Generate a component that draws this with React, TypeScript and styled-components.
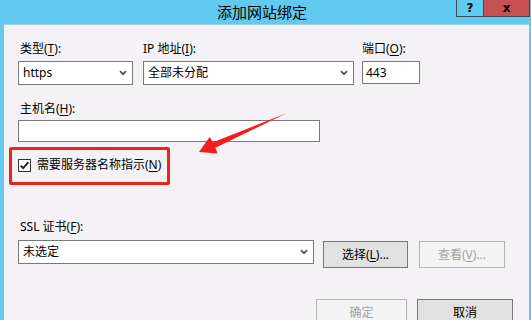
import React from "react";
import styled, { createGlobalStyle } from "styled-components";

const Global = createGlobalStyle`
  html, body { margin: 0; padding: 0; background: #62c9ef; }
  body { font-family: "Noto Sans", "Noto Sans CJK SC", sans-serif; font-size: 12px; color: #000; }
  * { box-sizing: border-box; }
`;

const Window = styled.div`
  position: relative;
  width: 531px;
  height: 320px;
  overflow: hidden;
  background: #62c9ef;
  display: flex;
  flex-direction: column;
  padding: 0 2px 0 4px;
`;

const TitleBar = styled.div`
  height: 27px;
  margin: 0 -2px 0 -4px;
  display: grid;
  grid-template-columns: 1fr auto 1fr;
  align-items: start;
`;

const Title = styled.div`
  grid-column: 2;
  font-family: "Noto Sans CJK SC", sans-serif;
  font-size: 15px;
  line-height: 24px;
  padding-right: 7px;
  color: #000;
`;

const Controls = styled.div`
  grid-column: 3;
  justify-self: end;
  display: flex;
  margin-right: 1px;
`;

const WinButton = styled.div<{ $close?: boolean }>`
  width: ${(p) => (p.$close ? 46 : 28)}px;
  height: 17px;
  background: ${(p) => (p.$close ? "#c75050" : "transparent")};
  border: 1px solid #3b4b55;
  border-top: none;
  ${(p) => (p.$close ? "border-left: none;" : "")}
  display: flex;
  align-items: center;
  justify-content: center;
  font-family: "DejaVu Sans", sans-serif;
  font-weight: bold;
  font-size: ${(p) => (p.$close ? 12 : 12)}px;
  line-height: 1;
  color: #000;
`;

const Panel = styled.div`
  flex: 1;
  background: #f5f2f6;
  border-top: 1px solid #9fd2e6;
  padding: 16px 16px 0 14px;
  display: flex;
  flex-direction: column;
`;

const TopRow = styled.div`
  display: flex;
  align-items: flex-start;
`;

const Field = styled.div<{ $w: number; $mr?: number }>`
  width: ${(p) => p.$w}px;
  margin-right: ${(p) => p.$mr ?? 0}px;
  display: flex;
  flex-direction: column;
`;

const Label = styled.div<{ $indent?: number; $gap?: number }>`
  font-size: 12px;
  line-height: 16px;
  padding-left: ${(p) => p.$indent ?? 0}px;
  margin-bottom: ${(p) => p.$gap ?? 4}px;
  white-space: nowrap;
  u { text-decoration-thickness: 1px; text-underline-offset: 2px; }
`;

const Select = styled.div<{ $w?: number }>`
  width: ${(p) => (p.$w ? `${p.$w}px` : "100%")};
  height: 24px;
  background: #fff;
  border: 1px solid #7a7a7a;
  display: flex;
  align-items: center;
  justify-content: space-between;
  padding: 0 5px 0 4px;
  font-size: 12px;
  line-height: 16px;
`;

const TextBox = styled.div<{ $w?: number; $h?: number }>`
  width: ${(p) => (p.$w ? `${p.$w}px` : "100%")};
  height: ${(p) => p.$h ?? 24}px;
  background: #fff;
  border: 1px solid #7a7a7a;
  display: flex;
  align-items: center;
  padding: 0 3px;
  font-size: 12px;
`;

const HostField = styled.div`
  margin-top: 16px;
  display: flex;
  flex-direction: column;
`;

const CheckRow = styled.div`
  margin-top: 15px;
  display: flex;
  align-items: center;
  gap: 6px;
  padding-left: 0;
  line-height: 16px;
  u { text-underline-offset: 2px; }
`;

const CheckBox = styled.div`
  width: 13px;
  height: 13px;
  border: 1px solid #333;
  background: #fff;
  display: flex;
  align-items: center;
  justify-content: center;
`;

const SslField = styled.div`
  margin-top: 46px;
  display: flex;
  flex-direction: column;
`;

const SslRow = styled.div`
  display: flex;
  align-items: flex-start;
`;

const Button = styled.div<{ $w: number; $disabled?: boolean; $ml?: number; $mt?: number }>`
  width: ${(p) => p.$w}px;
  height: 27px;
  margin-left: ${(p) => p.$ml ?? 0}px;
  margin-top: ${(p) => p.$mt ?? 0}px;
  background: ${(p) => (p.$disabled ? "#f4f4f4" : "#e1e1e1")};
  border: 1px solid ${(p) => (p.$disabled ? "#b4b4b4" : "#777")};
  color: ${(p) => (p.$disabled ? "#a2a2a2" : "#000")};
  display: flex;
  align-items: center;
  justify-content: center;
  font-size: 12px;
  line-height: 16px;
  white-space: nowrap;
  u { text-underline-offset: 2px; }
`;

const Footer = styled.div`
  margin-top: 31px;
  display: flex;
  justify-content: flex-end;
`;

const RedBox = styled.div`
  position: absolute;
  left: 9px;
  top: 147px;
  width: 161px;
  height: 38px;
  border: 3px solid #f02020;
  border-radius: 2px;
  pointer-events: none;
`;

const ArrowLayer = styled.svg`
  position: absolute;
  left: 0;
  top: 0;
  pointer-events: none;
`;

const Chevron = () => (
  <svg width="8" height="6" viewBox="0 0 8 6">
    <path d="M1 1.2 L4 4.2 L7 1.2" fill="none" stroke="#555" strokeWidth="1.8" />
  </svg>
);

const Check = () => (
  <svg width="11" height="11" viewBox="0 0 11 11">
    <path d="M1.6 5.6 L4.2 8.2 L9.4 2.2" fill="none" stroke="#222" strokeWidth="1.9" />
  </svg>
);

export default function App() {
  return (
    <>
      <Global />
      <Window>
        <TitleBar>
          <Title>添加网站绑定</Title>
          <Controls>
            <WinButton>?</WinButton>
            <WinButton $close>x</WinButton>
          </Controls>
        </TitleBar>
        <Panel>
          <TopRow>
            <Field $w={115} $mr={10}>
              <Label $indent={2}>类型(<u>T</u>):</Label>
              <Select>
                <span>https</span>
                <Chevron />
              </Select>
            </Field>
            <Field $w={211} $mr={8}>
              <Label>IP 地址(<u>I</u>):</Label>
              <Select>
                <span>全部未分配</span>
                <Chevron />
              </Select>
            </Field>
            <Field $w={58}>
              <Label>端口(<u>O</u>):</Label>
              <TextBox $h={23}>443</TextBox>
            </Field>
          </TopRow>
          <HostField>
            <Label $indent={2} $gap={3}>主机名(<u>H</u>):</Label>
            <TextBox $w={302} $h={22} />
          </HostField>
          <CheckRow>
            <CheckBox>
              <Check />
            </CheckBox>
            <span>需要服务器名称指示(<u>N</u>)</span>
          </CheckRow>
          <SslField>
            <Label $indent={2} $gap={5}>SSL 证书(<u>F</u>):</Label>
            <SslRow>
              <Select $w={296}>
                <span>未选定</span>
                <Chevron />
              </Select>
              <Button $w={85} $ml={9} $mt={1}>选择(<u>L</u>)...</Button>
              <Button $w={86} $ml={11} $mt={1} $disabled>查看(<u>V</u>)...</Button>
            </SslRow>
          </SslField>
          <Footer>
            <Button $w={91} $disabled>确定</Button>
            <Button $w={96} $ml={10}>取消</Button>
          </Footer>
        </Panel>
        <RedBox />
        <ArrowLayer width="531" height="320" viewBox="0 0 531 320">
          <polygon
            points="199,152 209.6,137 213,142.3 287,113 215.4,147.8 217.6,153.6"
            fill="#f21c1c"
          />
        </ArrowLayer>
      </Window>
    </>
  );
}
